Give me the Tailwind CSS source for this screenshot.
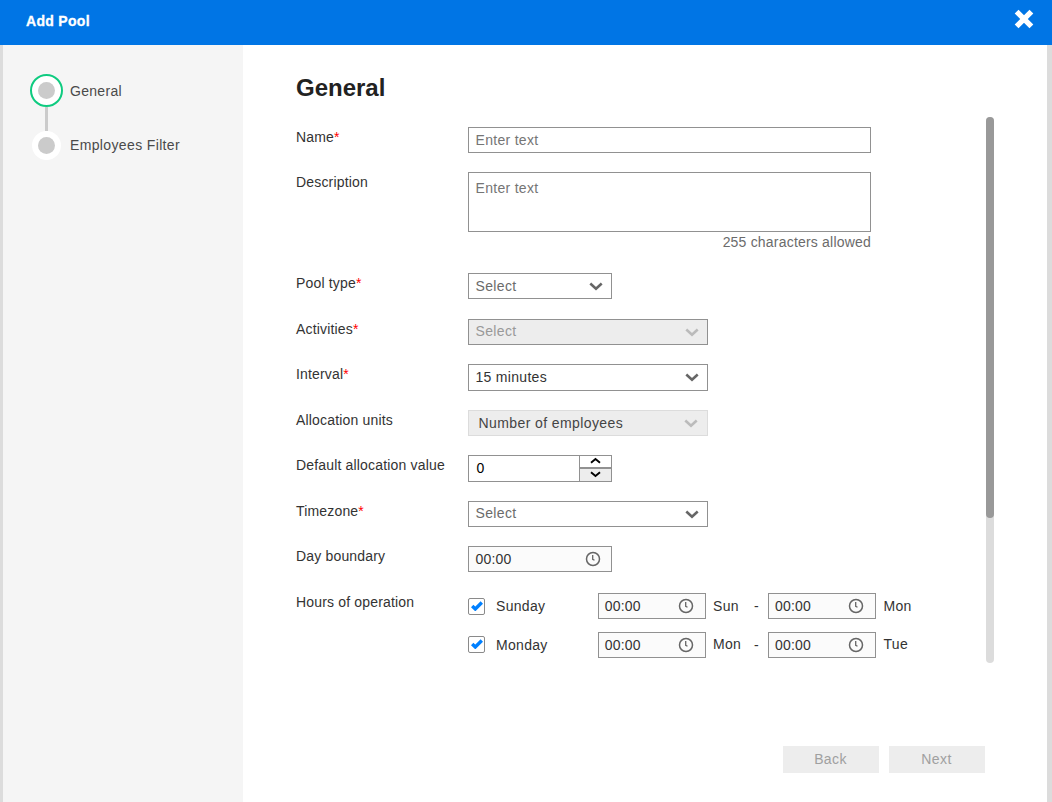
<!DOCTYPE html>
<html lang="en">
<head>
<meta charset="utf-8">
<title>Add Pool</title>
<script src="https://cdn.jsdelivr.net/npm/@tailwindcss/browser@4"></script>
</head>
<body class="h-[802px] w-[1052px] overflow-hidden bg-white font-['Liberation_Sans',Arial,sans-serif] text-[14px] leading-5 text-[#333]">
<svg class="hidden">
  <symbol id="chevron" viewBox="0 0 14 9"><path d="M1.300 1.500 7 6.700l5.700-5.200" fill="none" stroke="currentColor" stroke-width="2.600"/></symbol>
  <symbol id="clock" viewBox="0 0 16 16"><circle cx="8" cy="8" r="6.500" fill="none" stroke="currentColor" stroke-width="1.500"/><path d="M7.700 4v4.300l1.800 1" fill="none" stroke="currentColor" stroke-width="1.300"/></symbol>
  <symbol id="check" viewBox="0 0 12 10"><path d="M1.200 5 4.300 8 10.800 1.500" fill="none" stroke="currentColor" stroke-width="3.400"/></symbol>
</svg>
<div class="flex h-full flex-col">
  <header class="flex h-[45px] shrink-0 items-start justify-between bg-[#0075e5] pl-[26px] pr-[18px] text-white">
    <h1 class="mt-[11px] text-[14px] font-bold leading-5 tracking-[0.3px] [-webkit-text-stroke:0.3px_white]">Add Pool</h1>
    <svg class="mt-[9px] h-5 w-5" viewBox="0 0 20 20"><path d="M2.600 2.600l14.800 14.800M17.400 2.600l-14.800 14.800" stroke="currentColor" stroke-width="5.400" fill="none"/></svg>
  </header>
  <div class="flex min-h-0 flex-1 border-l-[3px] border-r-[5px] border-[#dcdcdc]">
    <nav class="w-60 shrink-0 bg-[#f5f5f5] pl-[27px] pt-[29px] tracking-[0.3px] text-[#4a4a4a]">
      <div class="flex h-[33px] items-center gap-[7px]">
        <span class="flex size-[33px] items-center justify-center rounded-full border-2 border-[#0fcb80] bg-white"><span class="size-[17px] rounded-full bg-[#cbcbcb]"></span></span>
        <span>General</span>
      </div>
      <div class="ml-[15px] h-6 w-[3px] bg-[#cbcbcb]"></div>
      <div class="ml-[2px] flex h-[29px] items-center gap-[9px]">
        <span class="flex size-[29px] items-center justify-center rounded-full bg-white"><span class="size-[17px] rounded-full bg-[#cbcbcb]"></span></span>
        <span class="-mt-0.5 tracking-[0.36px]">Employees Filter</span>
      </div>
    </nav>
    <main class="flex flex-1 flex-col pl-[53px] pr-[53px]">
      <h2 class="mt-[27px] h-[45px] text-[24px] font-bold leading-8 text-[#222]">General</h2>
      <div class="flex h-[546px] justify-between">
        <form class="grid grid-cols-[172px_1fr] grid-rows-[45px_101px_46px_45px_46px_45px_46px_45px_46px_79px] items-start pt-[10px] tracking-[0.17px]">
          <label>Name<span class="text-[#f00]">*</span></label>
          <div class="flex h-[26px] w-[403px] items-center border border-[#919191] pl-[6.5px] tracking-[0.3px] text-[#757575]">Enter text</div>

          <label>Description</label>
          <div class="w-[403px]">
            <div class="h-[60px] border border-[#919191] pl-[6.5px] pt-[5px] tracking-[0.3px] text-[#757575]">Enter text</div>
            <div class="text-right tracking-[0.2px] text-[#6b6b6b]">255 characters allowed</div>
          </div>

          <label>Pool type<span class="text-[#f00]">*</span></label>
          <div class="flex h-[26px] w-36 items-center justify-between border border-[#919191] pl-[6.5px] pr-2 tracking-[0.35px] text-[#6b6b6b]">Select<svg class="h-[9px] w-[14px] text-[#666]"><use href="#chevron"/></svg></div>

          <label>Activities<span class="text-[#f00]">*</span></label>
          <div class="flex h-[26px] w-60 items-center justify-between border border-[#919191] bg-[#ededed] pl-[6.5px] pr-2 tracking-[0.35px] text-[#999]"><span class="-mt-0.5">Select</span><svg class="h-[9px] w-[14px] text-[#bbb]"><use href="#chevron"/></svg></div>

          <label>Interval<span class="text-[#f00]">*</span></label>
          <div class="flex h-[27px] w-60 items-center justify-between border border-[#919191] pl-[6.5px] pr-2 tracking-[0.3px]"><span class="-mt-px">15 minutes</span><svg class="h-[9px] w-[14px] text-[#666]"><use href="#chevron"/></svg></div>

          <label>Allocation units</label>
          <div class="flex h-[26px] w-60 items-center justify-between border border-[#dcdcdc] bg-[#ededed] pl-[9.5px] pr-[9px] tracking-[0.4px] text-[#444]">Number of employees<svg class="h-[9px] w-[14px] text-[#bbb]"><use href="#chevron"/></svg></div>

          <label>Default allocation value</label>
          <div class="flex h-[27px] w-36 border border-[#919191] text-black">
            <span class="flex flex-1 items-center pb-px pl-[7.5px]">0</span>
            <span class="flex w-8 flex-col border-l border-[#919191]">
              <span class="flex h-[11px] items-start justify-center pt-px"><svg class="h-[7px] w-[11px]" viewBox="0 0 11 7"><path d="M1 5.700 5.500 2l4.500 3.700" fill="none" stroke="currentColor" stroke-width="1.900"/></svg></span>
              <span class="flex flex-1 items-start justify-center border-t-2 border-[#919191] bg-[#ededed] pt-[2px]"><svg class="h-[7px] w-[11px]" viewBox="0 0 11 7"><path d="M1 1.300 5.500 5l4.500-3.700" fill="none" stroke="currentColor" stroke-width="1.900"/></svg></span>
            </span>
          </div>

          <label>Timezone<span class="text-[#f00]">*</span></label>
          <div class="flex h-[26px] w-60 items-center justify-between border border-[#919191] pl-[6.5px] pr-2 tracking-[0.35px] text-[#6b6b6b]"><span class="-mt-0.5">Select</span><svg class="h-[9px] w-[14px] text-[#666]"><use href="#chevron"/></svg></div>

          <label>Day boundary</label>
          <div class="flex h-[26px] w-36 items-center justify-between border border-[#919191] bg-[#fbfbfb] pl-[6.5px] pr-[10px]">00:00<svg class="size-4 text-[#666]"><use href="#clock"/></svg></div>

          <label>Hours of operation</label>
          <div class="flex flex-col gap-[13px] pt-px">
            <div class="flex h-[26px] items-center tracking-[0.3px]">
              <span class="flex size-[17px] items-center justify-center rounded-xs border border-[#8a8a8a]"><svg class="h-[10px] w-3 text-[#0080ff]"><use href="#check"/></svg></span>
              <span class="ml-[11px] w-[102px]">Sunday</span>
              <span class="flex h-[26px] w-[108px] items-center justify-between border border-[#919191] bg-[#fbfbfb] pl-[5.700px] pr-[11px] tracking-[0.2px]">00:00<svg class="size-4 text-[#666]"><use href="#clock"/></svg></span>
              <span class="ml-[7px] w-[41px]">Sun</span><span class="w-[14px]">-</span>
              <span class="flex h-[26px] w-[108px] items-center justify-between border border-[#919191] bg-[#fbfbfb] pl-[6px] pr-[11px] tracking-[0.2px]">00:00<svg class="size-4 text-[#666]"><use href="#clock"/></svg></span>
              <span class="ml-[7.5px]">Mon</span>
            </div>
            <div class="flex h-[26px] items-center tracking-[0.3px]">
              <span class="-mt-0.5 flex size-[17px] items-center justify-center rounded-xs border border-[#8a8a8a]"><svg class="h-[10px] w-3 text-[#0080ff]"><use href="#check"/></svg></span>
              <span class="ml-[11px] w-[102px]">Monday</span>
              <span class="flex h-[26px] w-[108px] items-center justify-between border border-[#919191] bg-[#fbfbfb] pl-[5.700px] pr-[11px] tracking-[0.2px]">00:00<svg class="size-4 text-[#666]"><use href="#clock"/></svg></span>
              <span class="-mt-0.5 ml-[7px] w-[41px]">Mon</span><span class="w-[14px]">-</span>
              <span class="flex h-[26px] w-[108px] items-center justify-between border border-[#919191] bg-[#fbfbfb] pl-[6px] pr-[11px] tracking-[0.2px]">00:00<svg class="size-4 text-[#666]"><use href="#clock"/></svg></span>
              <span class="-mt-0.5 ml-[7.5px]">Tue</span>
            </div>
          </div>
        </form>
        <div class="w-2 rounded-full bg-[#dcdcdc]"><div class="h-[401px] rounded-full bg-[#999]"></div></div>
      </div>
      <div class="mt-[83px] flex justify-end gap-[10px] pr-[9px] tracking-[0.4px] text-[#a0a0a0]">
        <button class="h-[27px] w-24 bg-[#ededed] pb-px pr-px">Back</button>
        <button class="h-[27px] w-24 bg-[#ededed] pb-px pr-px">Next</button>
      </div>
    </main>
  </div>
</div>
</body>
</html>
